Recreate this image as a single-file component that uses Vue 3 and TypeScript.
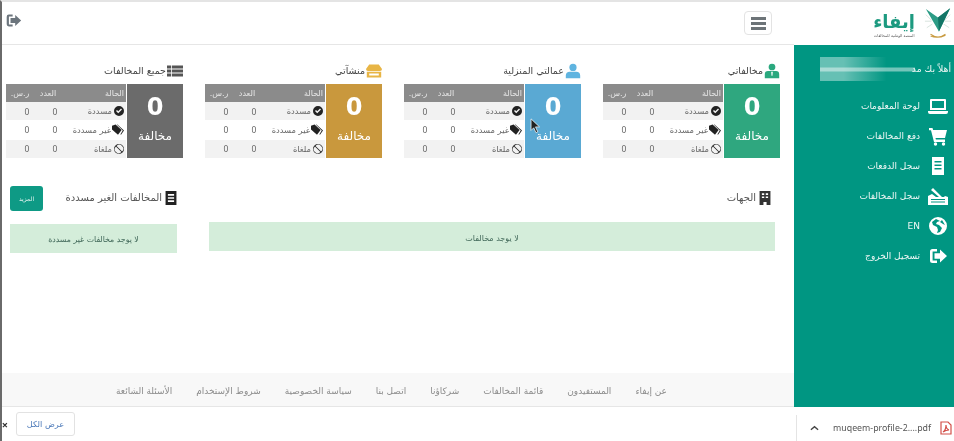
<script setup lang="ts">
interface Card { title: string; color: string; tint: string; icon: string }
const cards: Card[] = [
  { title: 'مخالفاتي', color: '#2fa77f', tint: '#2aa87e', icon: 'tie' },
  { title: 'عمالتي المنزلية', color: '#5aa9d3', tint: '#5fb4e0', icon: 'user' },
  { title: 'منشآتي', color: '#c9983d', tint: '#e8b545', icon: 'store' },
  { title: 'جميع المخالفات', color: '#6b6b6b', tint: '#555', icon: 'list' },
]
const rows = [
  { label: 'مسددة', icon: 'check' },
  { label: 'غير مسددة', icon: 'tag' },
  { label: 'ملغاة', icon: 'ban' },
]
const menu = [
  { label: 'لوحة المعلومات', icon: 'laptop' },
  { label: 'دفع المخالفات', icon: 'cart' },
  { label: 'سجل الدفعات', icon: 'receipt' },
  { label: 'سجل المخالفات', icon: 'sign' },
  { label: 'EN', icon: 'globe' },
  { label: 'تسجيل الخروج', icon: 'out' },
]
const links = ['عن إيفاء', 'المستفيدون', 'قائمة المخالفات', 'شركاؤنا', 'اتصل بنا', 'سياسة الخصوصية', 'شروط الإستخدام', 'الأسئلة الشائعة']
const outPath = 'M9 3H4.5A2.5 2.5 0 0 0 2 5.5v9A2.5 2.5 0 0 0 4.5 17H9v-2.4H4.6V5.4H9zM12 3.5V7.2H6.5v5.6H12v3.7L19 10z'
</script>

<template>
  <div class="screen">
    <div class="top">
      <aside class="side">
        <div class="logo">
          <svg class="mark" viewBox="0 0 30 36" width="28" height="34">
            <g stroke="#b9cfc4" stroke-width=".6"><path d="M2 8 8 14M1 15h7M3 22l6-4M28 8l-6 6M29 15h-7M27 22l-6-4" /></g>
            <path d="M2 2 15 11 28 1 16 26Z" fill="#2c9c86" />
            <path d="M15 11 28 1 16 26Z" fill="#127566" />
            <path d="M7 31q8 3 16-1M7 29q8 6 16 0" fill="none" stroke="#c89a3f" stroke-width="1.1" />
          </svg>
          <div class="brand">
            <b>إيفاء</b>
            <small>المنصة الوطنية للمخالفات</small>
          </div>
        </div>
        <div class="nav">
          <div class="welcome">
            <span>أهلاً بك مد</span>
            <i class="smudge"></i>
          </div>
          <a v-for="m in menu" :key="m.label" class="item">
            <span class="item-icon">
              <svg viewBox="0 0 20 20" width="20" height="20" fill="#fff">
                <template v-if="m.icon === 'laptop'"><path fill-rule="evenodd" d="M3 3h14a1 1 0 0 1 1 1v10H2V4a1 1 0 0 1 1-1zm1 2v7h12V5zM0 15h20v1a2 2 0 0 1-2 2H2a2 2 0 0 1-2-2z" /></template>
                <template v-else-if="m.icon === 'cart'"><path d="M1 2h3.5l.6 2H19l-2 8H7.5l.4 1.6H17V16H6L3 4.200H1z" /><circle cx="7.500" cy="18" r="1.700" /><circle cx="15.500" cy="18" r="1.700" /></template>
                <template v-else-if="m.icon === 'receipt'"><path fill-rule="evenodd" d="M4 1h12v18H4zm2.500 4v1.500h7V5zm0 3.500V10h7V8.500zm0 3.500v1.500h7V12z" /></template>
                <template v-else-if="m.icon === 'sign'"><path fill-rule="evenodd" d="M0 10l4-2 4 3h3L3 4l2-2 9 9h2l1-1 3 1v8H0zm3 3v1h14v-1zm0 2.500v1h14v-1z" /></template>
                <template v-else-if="m.icon === 'globe'"><path fill-rule="evenodd" d="M10 1a9 9 0 1 1 0 18 9 9 0 0 1 0-18zM8 3 4 6l1 3 4 2 1 3-1 3 3-1 2-4-3-3-3-1 1-2 3-1zm6 1-2 2 3 2 2 1z" /></template>
                <template v-else><path :d="outPath" /></template>
              </svg>
            </span>
            <span>{{ m.label }}</span>
          </a>
        </div>
      </aside>

      <main class="main">
        <header class="bar">
          <button class="burger"><i></i><i></i><i></i></button>
          <svg class="leave" viewBox="0 0 20 20" width="17" height="17" fill="#6c757d"><path :d="outPath" /></svg>
        </header>

        <section class="cards">
          <article v-for="c in cards" :key="c.title" class="card">
            <h3 class="card-title">
              <svg viewBox="0 0 20 20" width="16" height="16" :fill="c.tint">
                <template v-if="c.icon === 'tie'"><circle cx="10" cy="5" r="4.200" /><path fill-rule="evenodd" d="M1 19v-5a4 4 0 0 1 4-4h10a4 4 0 0 1 4 4v5zm8-8 .4 5h1.200l.4-5z" /></template>
                <template v-else-if="c.icon === 'user'"><circle cx="10" cy="5.500" r="4.500" /><path d="M1 19v-3a5 5 0 0 1 5-5h8a5 5 0 0 1 5 5v3z" /></template>
                <template v-else-if="c.icon === 'store'"><path fill-rule="evenodd" d="M4 2h12l4 5.500A2.500 2.500 0 0 1 17.500 10h-15A2.500 2.500 0 0 1 0 7.500zM1 11h18v7H1zm3 2v2.500h12V13z" /></template>
                <template v-else><path d="M0 3h5v4H0zM6 3h14v4H6zM0 8h5v4H0zM6 8h14v4H6zM0 13h5v4H0zM6 13h14v4H6z" /></template>
              </svg>
              <span>{{ c.title }}</span>
            </h3>
            <div class="card-body">
              <div class="tile" :style="{ background: c.color }">
                <strong>0</strong>
                <span>مخالفة</span>
              </div>
              <table class="stats">
                <thead><tr><th>الحالة</th><th>العدد</th><th>ر.س.</th></tr></thead>
                <tbody>
                  <tr v-for="r in rows" :key="r.label">
                    <td class="status">
                      <svg viewBox="0 0 20 20" :class="{ big: r.icon === 'tag' }" width="10" height="10" fill="#222">
                        <template v-if="r.icon === 'check'"><path fill-rule="evenodd" d="M10 0a10 10 0 1 1 0 20 10 10 0 0 1 0-20zM4 10l4.500 4.500L16 7l-2-2-5.500 5.500L6 8z" /></template>
                        <template v-else-if="r.icon === 'tag'"><path d="M0 3 6 1l10 9-6 8L0 9zM9 1l11 10-5 7-1-1 4-6L8 1z" /></template>
                        <template v-else><path fill-rule="evenodd" d="M10 0a10 10 0 1 1 0 20 10 10 0 0 1 0-20zM5 3.800 16.200 15A7.500 7.500 0 0 0 5 3.800zM3.800 5A7.500 7.500 0 0 0 15 16.200z" /></template>
                      </svg>
                      <span>{{ r.label }}</span>
                    </td>
                    <td>0</td>
                    <td>0</td>
                  </tr>
                </tbody>
              </table>
            </div>
          </article>
        </section>

        <section class="panels">
          <div class="panel wide">
            <div class="head">
              <h4>
                <svg viewBox="0 0 14 18" width="12" height="14" fill="#333"><path fill-rule="evenodd" d="M0 0h14v18H9v-4H5v4H0zm3 3v2h3V3zm5 0v2h3V3zM3 7v2h3V7zm5 0v2h3V7z" /></svg>
                <span>الجهات</span>
              </h4>
            </div>
            <div class="alert">لا يوجد مخالفات</div>
          </div>
          <div class="panel narrow">
            <div class="head">
              <h4>
                <svg viewBox="0 0 14 18" width="12" height="14" fill="#222"><path fill-rule="evenodd" d="M0 0h14v18H0zm3 4v2h8V4zm0 4v2h8V8zm0 4v2h8v-2z" /></svg>
                <span>المخالفات الغير مسددة</span>
              </h4>
              <button class="more">المزيد</button>
            </div>
            <div class="alert">لا يوجد مخالفات غير مسددة</div>
          </div>
        </section>

        <footer class="foot">
          <a v-for="l in links" :key="l">{{ l }}</a>
        </footer>
      </main>
    </div>

    <div class="downloads">
      <div class="file">
        <svg viewBox="0 0 12 14" width="12" height="14" fill="none" stroke="#d3504a" stroke-width="1.200"><path d="M1 1h7l3 3v9H1zM3 11q3-2 3-7 0 4 3 5-3 0-6 2z" /></svg>
        <span class="fname">muqeem-profile-2....pdf</span>
        <svg viewBox="0 0 10 6" width="9" height="6" fill="none" stroke="#444" stroke-width="1.500"><path d="M1 5l4-3.500L9 5" /></svg>
      </div>
      <div class="dl-left">
        <button class="all">عرض الكل</button>
        <span class="close">×</span>
      </div>
    </div>

    <svg class="cursor" viewBox="0 0 12 18" width="11" height="16"><path d="M1 1v13l3-3 2.500 5.500 2-1L6 10h4.500z" fill="#222" stroke="#fff" stroke-width=".8" /></svg>
  </div>
</template>

<style>
html, body { margin: 0; background: #fff; overflow: hidden; }
</style>

<style scoped>
.screen {
  position: relative;
  box-sizing: border-box;
  width: 954px;
  height: 441px;
  border-top: 2px solid #e4e4e4;
  border-left: 2px solid #6a6a6a;
  direction: rtl;
  display: flex;
  flex-direction: column;
  overflow: hidden;
  font-family: "DejaVu Sans", "Noto Sans", sans-serif;
  color: #555;
  background: #fff;
  filter: blur(0.4px);
}
.top { display: flex; height: 405px; }

.side { width: 160px; flex: none; display: flex; flex-direction: column; }
.logo { height: 43px; display: flex; align-items: center; padding-right: 2px; gap: 9px; }
.brand { display: flex; flex-direction: column; align-items: center; color: #1d9a80; margin-top: 2px; }
.brand b { font-size: 18px; line-height: 22px; }
.brand small { font-size: 3.800px; line-height: 6px; color: #555; }
.nav { flex: 1; background: #009682; color: #eef7f5; }
.welcome { position: relative; height: 46px; display: flex; align-items: center; padding-right: 3px; font-size: 9.300px; }
.smudge {
  position: absolute; top: 12px; right: 39px; width: 95px; height: 24px;
  background:
    linear-gradient(to bottom, transparent 10px, rgba(255,255,255,.45) 11px, rgba(255,255,255,.45) 14px, transparent 15px),
    linear-gradient(to left, transparent 30%, rgba(255,255,255,.4) 75%);
}
.item { height: 30px; display: flex; align-items: center; gap: 8px; padding-right: 6px; font-size: 9px; }
.item-icon { width: 20px; height: 20px; display: flex; align-items: center; justify-content: center; }

.main { flex: 1; display: flex; flex-direction: column; min-width: 0; }
.bar { box-sizing: content-box; height: 33px; flex: none; border-bottom: 1px solid #e6e6e6; display: flex; justify-content: space-between; align-items: flex-start; padding: 9px 22px 0 3px; }
.burger { width: 28px; height: 24px; padding: 0; background: #fff; border: 1px solid #e3e3e3; border-radius: 4px; display: flex; flex-direction: column; gap: 2px; align-items: center; justify-content: center; }
.burger i { width: 15px; height: 3px; background: #6d7478; }
.leave { margin-top: 1px; }

.cards { display: grid; grid-template-columns: repeat(4, 177px); gap: 22px; padding: 0 14px 0 3px; }
.card-title { height: 39px; margin: 0; display: flex; align-items: center; gap: 1px; font-size: 9.500px; font-weight: 400; color: #444; padding-top: 12px; box-sizing: border-box; }
.card-body { display: flex; height: 74px; }
.tile { width: 56px; flex: none; color: #fff; display: flex; flex-direction: column; align-items: center; }
.tile strong { font: 700 24px/27px "DejaVu Sans", sans-serif; margin-top: 10px; }
.tile span { font-size: 12px; line-height: 16px; margin-top: 7px; }
.stats { width: 120px; height: 74px; margin-right: 1px; border-collapse: collapse; table-layout: fixed; font-size: 8px; color: #555; }
.stats th { background: #8b8b8b; color: #e8e8e8; font-weight: 400; height: 18px; padding: 0; }
.stats td { padding: 0 0 0 14px; text-align: center; font-family: "Noto Sans", sans-serif; font-size: 8.500px; color: #666; }
.stats th:first-child, .stats td:first-child { width: 62px; text-align: right; padding: 0 2px 0 0; }
.stats th:nth-child(2), .stats td:nth-child(2) { width: 28px; }
.stats tbody tr:nth-child(odd) { background: #f2f2f2; }
.stats .status { font-family: "DejaVu Sans", sans-serif; font-size: 8.300px; white-space: nowrap; }
.stats .status svg { vertical-align: -2px; margin-left: 2px; }
.stats .status svg.big { width: 12px; height: 12px; vertical-align: -3px; margin-left: 1px; }

.panels { display: grid; grid-template-columns: 566px 167px; gap: 32px; padding: 0 19px 0 8px; margin-top: 28px; }
.head { display: flex; align-items: flex-start; justify-content: space-between; }
.wide .head { height: 36px; }
.narrow .head { height: 38px; }
.head h4 { margin: 3px 4px 0 0; height: 17px; display: flex; align-items: center; gap: 3px; font-size: 10px; font-weight: 400; color: #555; }
.narrow .head h4 { margin-right: 0; }
.more { width: 33px; height: 25px; padding: 0; border: 0; border-radius: 3px; background: #0e9a85; color: #e8f5f2; font: 6px "DejaVu Sans", sans-serif; }
.alert { box-sizing: border-box; height: 29px; padding-top: 3px; background: #d4edda; color: #42695a; font-size: 8px; display: flex; align-items: center; justify-content: center; }
.narrow .alert { padding-top: 2px; font-size: 7.800px; }

.foot { margin-top: auto; height: 34px; flex: none; background: #f8f8f8; border-bottom: 1px solid #e6e6e6; display: flex; align-items: center; gap: 24px; padding: 2px 127px 0 0; box-sizing: border-box; font-size: 9px; color: #8c8c8c; white-space: nowrap; }

.downloads { flex: 1; display: flex; justify-content: space-between; align-items: flex-end; background: #fff; }
.file { box-sizing: border-box; width: 158px; height: 26px; display: flex; align-items: center; padding-right: 2px; border-left: 1px solid #e4e4e4; }
.file svg { flex: none; }
.fname { direction: ltr; font: 8.800px "Noto Sans", sans-serif; color: #555; margin: 0 9px 0 14px; white-space: nowrap; }
.dl-left { display: flex; align-items: center; gap: 8px; height: 34px; }
.all { width: 59px; height: 24px; padding: 0; background: #fff; border: 1px solid #e2e2e2; border-radius: 3px; color: #4a78b8; font: 8.200px "DejaVu Sans", sans-serif; }
.close { font: 700 11px "Noto Sans", sans-serif; color: #333; width: 6px; }

.cursor { position: absolute; left: 528px; top: 116px; }
</style>
